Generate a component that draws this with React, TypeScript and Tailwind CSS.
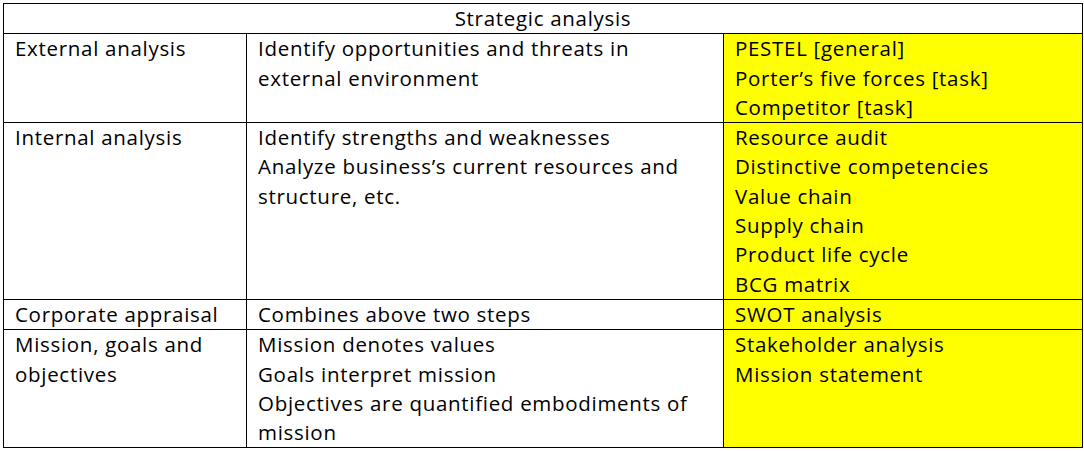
const rows = [
  {
    name: ['External analysis'],
    desc: ['Identify opportunities and threats in', 'external environment'],
    tools: ['PESTEL [general]', 'Porter’s five forces [task]', 'Competitor [task]'],
  },
  {
    name: ['Internal analysis'],
    desc: ['Identify strengths and weaknesses', 'Analyze business’s current resources and', 'structure, etc.'],
    tools: [
      'Resource audit',
      'Distinctive competencies',
      'Value chain',
      'Supply chain',
      'Product life cycle',
      'BCG matrix',
    ],
  },
  {
    name: ['Corporate appraisal'],
    desc: ['Combines above two steps'],
    tools: ['SWOT analysis'],
  },
  {
    name: ['Mission, goals and', 'objectives'],
    desc: ['Mission denotes values', 'Goals interpret mission', 'Objectives are quantified embodiments of', 'mission'],
    tools: ['Stakeholder analysis', 'Mission statement'],
  },
]

function Lines({ items }: { items: string[] }) {
  return (
    <>
      {items.map((line) => (
        <div key={line} className="whitespace-nowrap">
          {line}
        </div>
      ))}
    </>
  )
}

export default function App() {
  return (
    <div className="h-[451px] w-[1084px] bg-white pl-[3px] pt-[3px] font-['Open_Sans',sans-serif] text-[20.5px] leading-[29.3px] tracking-[0.7px] text-black">
      <table className="w-[1079px] table-fixed border-collapse">
        <colgroup>
          <col className="w-[243px]" />
          <col className="w-[477px]" />
          <col className="w-[359px]" />
        </colgroup>
        <tbody>
          <tr>
            <td colSpan={3} className="border border-black p-0 text-center">
              Strategic analysis
            </td>
          </tr>
          {rows.map((row) => (
            <tr key={row.name[0]}>
              <td className="border border-black px-[11px] py-0 align-top">
                <Lines items={row.name} />
              </td>
              <td className="border border-black px-[11px] py-0 align-top">
                <Lines items={row.desc} />
              </td>
              <td className="border border-black bg-[#ffff00] px-[11px] py-0 align-top">
                <Lines items={row.tools} />
              </td>
            </tr>
          ))}
        </tbody>
      </table>
    </div>
  )
}
